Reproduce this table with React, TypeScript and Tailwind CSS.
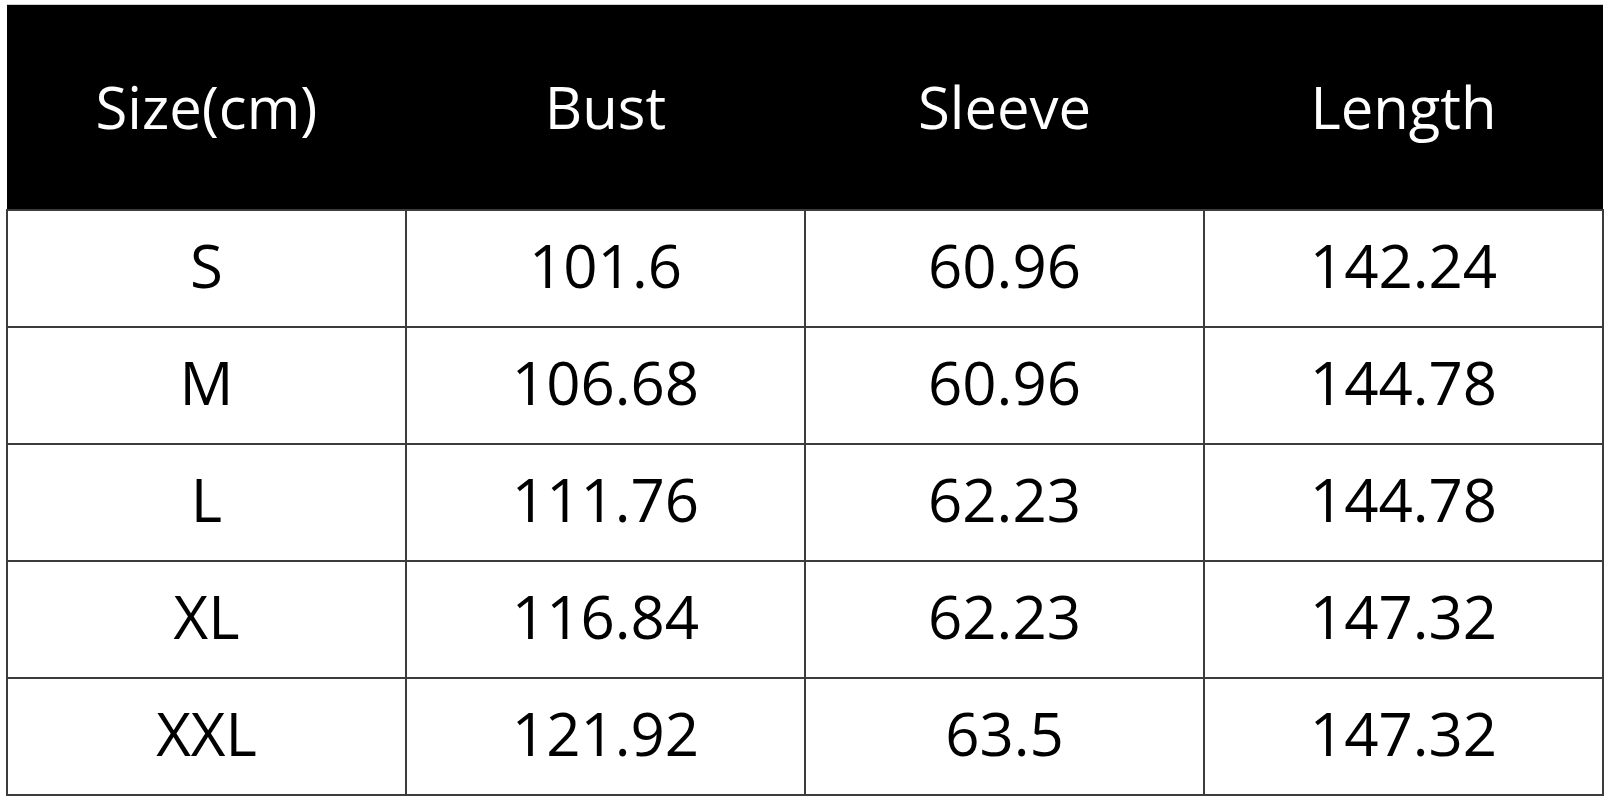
const headers = ['Size(cm)', 'Bust', 'Sleeve', 'Length'];

const rows = [
  ['S', '101.6', '60.96', '142.24'],
  ['M', '106.68', '60.96', '144.78'],
  ['L', '111.76', '62.23', '144.78'],
  ['XL', '116.84', '62.23', '147.32'],
  ['XXL', '121.92', '63.5', '147.32'],
];

export default function App() {
  return (
    <main className="min-h-screen bg-white pl-[6px] pt-[4px]">
      <table
        className="w-[1598px] table-fixed border-collapse"
        style={{ fontFamily: '"Open Sans", "Noto Sans", sans-serif' }}
      >
        <thead>
          <tr className="h-[205px] bg-black">
            {headers.map((h) => (
              <th
                key={h}
                className="border-t border-[#d0d0d0] text-center align-middle text-[58px] font-normal leading-none text-white"
              >
                {h}
              </th>
            ))}
          </tr>
        </thead>
        <tbody>
          {rows.map((row) => (
            <tr key={row[0]} className="h-[117px]">
              {row.map((cell, i) => (
                <td
                  key={i}
                  className="border-2 border-[#3c3c3c] pb-[6px] text-center align-middle text-[60px] leading-none text-black"
                >
                  {cell}
                </td>
              ))}
            </tr>
          ))}
        </tbody>
      </table>
    </main>
  );
}
